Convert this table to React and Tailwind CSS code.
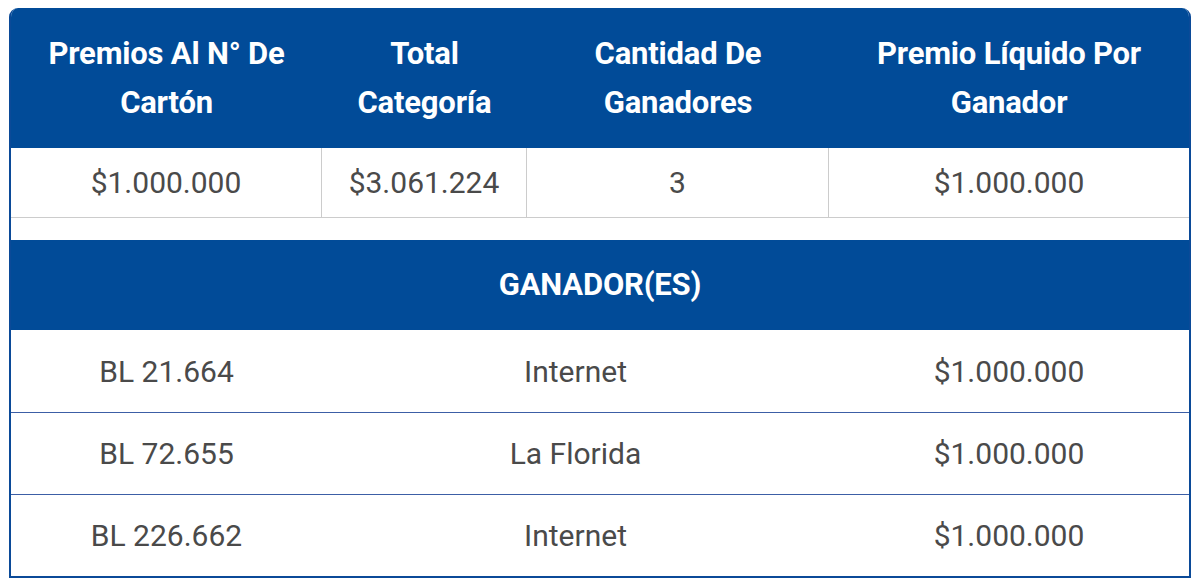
export default function App() {
  const winners = [
    { id: 'BL 21.664', place: 'Internet', prize: '$1.000.000' },
    { id: 'BL 72.655', place: 'La Florida', prize: '$1.000.000' },
    { id: 'BL 226.662', place: 'Internet', prize: '$1.000.000' },
  ]

  return (
    <div className="w-[1200px] h-[585px] bg-white pt-2 px-[9px] font-['Roboto',sans-serif]">
      <div className="w-full rounded-t-[9px] overflow-hidden border-x-2 border-b-2 border-[#0b4a98] bg-white">
        {/* top table header */}
        <div className="grid grid-cols-[311px_205px_302px_1fr] h-[140px] bg-[#014b98] text-white font-bold text-[31px] leading-[49px] text-center tracking-[-0.2px]">
          <div className="flex items-center justify-center">Premios Al N° De<br />Cartón</div>
          <div className="flex items-center justify-center">Total<br />Categoría</div>
          <div className="flex items-center justify-center">Cantidad De<br />Ganadores</div>
          <div className="flex items-center justify-center">Premio Líquido Por<br />Ganador</div>
        </div>

        {/* top table values */}
        <div className="grid grid-cols-[311px_205px_302px_1fr] h-[70px] border-b border-[#cccccc] text-[#4a4a4a] text-[30px] text-center">
          <div className="flex items-center justify-center border-r border-[#cccccc]">$1.000.000</div>
          <div className="flex items-center justify-center border-r border-[#cccccc]">$3.061.224</div>
          <div className="flex items-center justify-center border-r border-[#cccccc]">3</div>
          <div className="flex items-center justify-center">$1.000.000</div>
        </div>

        <div className="h-[22px]" />

        {/* winners */}
        <div className="h-[90px] bg-[#014b98] flex items-center justify-center text-white font-bold text-[31px] tracking-[-0.2px]">
          GANADOR(ES)
        </div>
        {winners.map((w, i) => (
          <div
            key={w.id}
            className={`grid grid-cols-[311px_507px_1fr] h-[82px] text-[#4a4a4a] text-[30px] text-center ${i > 0 ? 'border-t border-[#3c5ea6]' : ''}`}
          >
            <div className="flex items-center justify-center">{w.id}</div>
            <div className="flex items-center justify-center">{w.place}</div>
            <div className="flex items-center justify-center">{w.prize}</div>
          </div>
        ))}
      </div>
    </div>
  )
}
